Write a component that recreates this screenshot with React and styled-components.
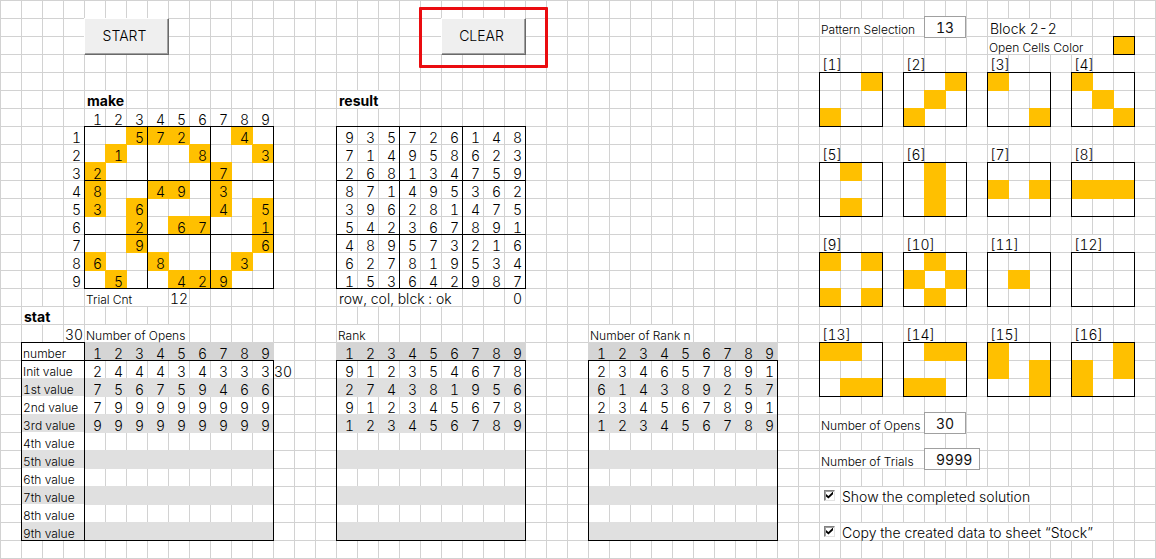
import React, { useState } from "react";
import styled, { createGlobalStyle, css } from "styled-components";

const ORANGE = "#ffc000";
const HEAD = "#d5d5d5";
const BAND = "#e0e0e0";

const GlobalStyle = createGlobalStyle`
  *, *::before, *::after { box-sizing: border-box; }
  body { margin: 0; background: #fff; }
  button, input { font: inherit; color: inherit; }
`;

/* Worksheet surface: 21px by 18px cells */
const Sheet = styled.div`
  display: flex;
  align-items: flex-start;
  gap: 42px;
  min-height: 100vh;
  padding: 18px 21px 0;
  color: #000;
  font-family: Inter, "Liberation Sans", sans-serif;
  font-size: 14px;
  font-weight: 300;
  font-variant-numeric: tabular-nums;
  line-height: 14px;
  background-color: #fff;
  background-image: linear-gradient(to right, #d2d2d2 1px, transparent 1px),
    linear-gradient(to bottom, #d2d2d2 1px, transparent 1px);
  background-size: 21px 18px;
`;

const Main = styled.main`
  flex: none;
`;

const Side = styled.aside`
  flex: none;
`;

const Toolbar = styled.div`
  display: grid;
  grid-template-columns: 252px 252px;
  padding-left: 63px;
  margin-bottom: 36px;
`;

const Slot = styled.div`
  position: relative;
  width: 85px;
  margin-left: ${(p) => (p.$marked ? 105 : 0)}px;
  ${(p) =>
    p.$marked &&
    css`
      &::after {
        content: "";
        position: absolute;
        inset: -11px -22px -13px;
        border: 3px solid #ea0c10;
        border-radius: 1px;
        pointer-events: none;
      }
    `}
`;

const Button = styled.button`
  display: block;
  width: 100%;
  height: 37px;
  padding: 0 4px 2px 0;
  border: 1px solid;
  border-color: #fff #696969 #696969 #fff;
  border-radius: 0;
  box-shadow: inset -1px -1px 0 #a0a0a0;
  background: #efefef;
`;

const Boards = styled.div`
  display: flex;
  gap: 63px;
  padding-left: 42px;
  margin-top: -1px;
`;

const Stats = styled.div`
  display: flex;
`;

const Stat = styled.section`
  margin-right: ${(p) => p.$after || 0}px;
`;

const Line = styled.div`
  display: flex;
  height: 18px;
  padding-left: ${(p) => (p.$indent || 0) * 21}px;
`;

const Text = styled.div`
  width: ${(p) => p.$cells * 21}px;
  height: 18px;
  padding: ${(p) => (p.$small ? 4 : 3)}px ${(p) => (p.$right ? 3 : 0)}px 0
    ${(p) => (p.$small || p.$right ? 1 : 2)}px;
  border: 0 solid transparent;
  border-width: 1px 0 0 1px;
  background: #fff;
  background-clip: padding-box;
  font-size: ${(p) => (p.$small ? 12 : 14)}px;
  white-space: nowrap;
  text-align: ${(p) => (p.$right ? "right" : "left")};
`;

const Title = styled(Text).attrs({ as: "h2" })`
  margin: 0;
  font-weight: 700;
`;

const Total = styled.div`
  width: 21px;
  height: 18px;
  margin: 36px 42px 0 0;
  padding: 5px 0 0 1px;
`;

const Table = styled.table`
  border-collapse: separate;
  border-spacing: 0;
  table-layout: fixed;
  width: ${(p) => p.$cells * 21}px;
`;

/* Edges are shadows, so that a ruled cell keeps its 21 by 18 size */
const edges = ({ $fill, $l, $t, $r, $b }) => {
  const list = [];
  if ($l) list.push("inset 1px 0 0 #000");
  if ($t) list.push("inset 0 1px 0 #000");
  if ($r || $fill) list.push(`1px 0 0 ${$r ? "#000" : $fill}`);
  if ($b || $fill) list.push(`0 1px 0 ${$b ? "#000" : $fill}`);
  if (($r && $b) || $fill) list.push(`1px 1px 0 ${$r || $b ? "#000" : $fill}`);
  return list.join(", ") || "none";
};

const cell = css`
  width: ${(p) => (p.$wide ? 63 : 21)}px;
  height: 18px;
  padding: ${(p) => (p.$wide ? "6px 0 0 2px" : "6px 3px 0 0")};
  background: ${(p) => p.$fill || "transparent"};
  box-shadow: ${edges};
  font-weight: 300;
  font-size: ${(p) => (p.$wide ? 12 : 14)}px;
  line-height: 12px;
  text-align: ${(p) => (p.$wide ? "left" : "right")};
  white-space: nowrap;
`;
const Td = styled.td`${cell}`;
const Th = styled.th`${cell}`;

const PatternHead = styled.div`
  display: grid;
  grid-template-columns: 168px 147px;
  height: 36px;
`;

const Field = styled.label`
  display: flex;
  align-items: center;
  height: 18px;
  margin-top: ${(p) => p.$top || 0}px;
`;

const Box = styled.input`
  width: ${(p) => (p.$wide ? 56 : 42)}px;
  height: 22px;
  padding: 0 0 0 11px;
  border: 1px solid #a0a0a0;
  border-radius: 0;
  background: #fff;
  color: #111;
  font-weight: 400;
  flex: none;
`;

const ColorLine = styled.div`
  display: flex;
  justify-content: space-between;
  height: 18px;
`;

const Swatch = styled.span`
  width: 22px;
  height: 19px;
  margin-right: -1px;
  border: 1px solid #000;
  background: ${ORANGE};
`;

const Patterns = styled.div`
  display: grid;
  grid-template-columns: repeat(4, 63px);
  gap: 18px 21px;
`;

const Check = styled.label`
  display: flex;
  align-items: center;
  gap: 6px;
  height: 18px;
  margin-top: 18px;
  padding-left: 5px;
`;

const Tick = styled.input`
  appearance: none;
  position: relative;
  width: 11px;
  height: 11px;
  margin: 0;
  border: 1px solid;
  border-color: #808080 #e3e3e3 #e3e3e3 #808080;
  box-shadow: inset 1px 1px 0 #a0a0a0;
  background: #fff;
  &:checked::after {
    content: "";
    position: absolute;
    inset: 1px;
    background: #000;
    clip-path: polygon(0 35%, 35% 65%, 100% 0, 100% 38%, 35% 100%, 0 72%);
  }
`;

const CheckText = styled.span`
  padding: 3px 1px 0;
  background: #fff;
  white-space: nowrap;
`;

const NINE = [1, 2, 3, 4, 5, 6, 7, 8, 9];

const PUZZLE = [
  "005720040", "010008003", "200000700",
  "800490300", "306000405", "002067001",
  "009000006", "600800030", "050042900",
];
const SOLUTION = [
  "935726148", "714958623", "268134759",
  "871495362", "396281475", "542367891",
  "489573216", "627819534", "153642987",
];
const OPENS = ["244434333", "756759466", "799999999", "999999999"];
const RANK = ["912354678", "274381956", "912345678", "123456789"];
const RANK_N = ["234657891", "614389257", "234567891", "123456789"];
const VALUES = ["Init", "1st", "2nd", "3rd", "4th", "5th", "6th", "7th", "8th", "9th"];

const PATTERNS = [
  "001000100", "001010100", "100000001", "100010001",
  "010000010", "010010010", "000101000", "000111000",
  "101000101", "010101010", "000010000", "000000000",
  "110000011", "011000110", "100101001", "001101100",
];

function Sudoku({ rows, labelled, name }) {
  return (
    <Table $cells={labelled ? 10 : 9} aria-label={name}>
      {labelled && (
        <thead>
          <tr>
            <Td />
            {NINE.map((n) => <Th key={n} scope="col">{n}</Th>)}
          </tr>
        </thead>
      )}
      <tbody>
        {rows.map((row, y) => (
          <tr key={y}>
            {labelled && <Th scope="row">{y + 1}</Th>}
            {[...row].map((d, x) => (
              <Td
                key={x}
                $fill={labelled && d !== "0" ? ORANGE : undefined}
                $l={x % 3 === 0}
                $t={y % 3 === 0}
                $r={x === 8}
                $b={y === 8}
              >
                {d === "0" ? "" : d}
              </Td>
            ))}
          </tr>
        ))}
      </tbody>
    </Table>
  );
}

function StatTable({ rows, labelled, name }) {
  return (
    <Table $cells={labelled ? 12 : 9} aria-label={name}>
      <thead>
        <tr>
          {labelled && <Th $wide $l $t $fill="#fff" scope="col">number</Th>}
          {NINE.map((n) => (
            <Th key={n} $fill={HEAD} $l={labelled && n === 1} scope="col">{n}</Th>
          ))}
        </tr>
      </thead>
      <tbody>
        {VALUES.map((v, y) => {
          const fill = y % 2 ? BAND : undefined;
          const last = y === VALUES.length - 1;
          return (
            <tr key={v}>
              {labelled && (
                <Th $wide $l $t={y === 0} $b={last} $fill={fill || "#fff"} scope="row">
                  {v} value
                </Th>
              )}
              {NINE.map((n, x) => (
                <Td key={n} $fill={fill} $l={x === 0} $t={y === 0} $r={x === 8} $b={last}>
                  {rows[y] ? rows[y][x] : ""}
                </Td>
              ))}
            </tr>
          );
        })}
      </tbody>
    </Table>
  );
}

function Pattern({ index, cells }) {
  return (
    <div>
      <Text $cells={index > 9 ? 2 : 1}>[{index}]</Text>
      <Table $cells={3} aria-label={`Pattern ${index}`}>
        <tbody>
          {[0, 1, 2].map((y) => (
            <tr key={y}>
              {[0, 1, 2].map((x) => (
                <Td
                  key={x}
                  $fill={cells[y * 3 + x] === "1" ? ORANGE : undefined}
                  $l={x === 0}
                  $t={y === 0}
                  $r={x === 2}
                  $b={y === 2}
                />
              ))}
            </tr>
          ))}
        </tbody>
      </Table>
    </div>
  );
}

export default function App() {
  const [pattern, setPattern] = useState("13");
  const [opens, setOpens] = useState("30");
  const [trials, setTrials] = useState("9999");

  return (
    <>
      <GlobalStyle />
      <Sheet>
        <Main>
          <Toolbar>
            <Slot><Button type="button">START</Button></Slot>
            <Slot $marked><Button type="button">CLEAR</Button></Slot>
          </Toolbar>

          <Boards>
            <section>
              <Line $indent={1}><Title $cells={2}>make</Title></Line>
              <Sudoku rows={PUZZLE} labelled name="make" />
              <Line $indent={1}>
                <Text $small $cells={4}>Trial Cnt</Text>
                <Text $right $cells={1}>12</Text>
              </Line>
            </section>
            <section>
              <Line><Title $cells={3}>result</Title></Line>
              <Line />
              <Sudoku rows={SOLUTION} name="result" />
              <Line>
                <Text $cells={6}>row, col, blck : ok</Text>
                <Line $indent={2}><Text $right $cells={1}>0</Text></Line>
              </Line>
            </section>
          </Boards>

          <Line><Title $cells={2}>stat</Title></Line>
          <Stats>
            <Stat>
              <Line $indent={2}>
                <Text $right $cells={1}>30</Text>
                <Text $small $cells={5}>Number of Opens</Text>
              </Line>
              <StatTable rows={OPENS} labelled name="Number of Opens" />
            </Stat>
            <Total>30</Total>
            <Stat $after={63}>
              <Line><Text $small $cells={2}>Rank</Text></Line>
              <StatTable rows={RANK} name="Rank" />
            </Stat>
            <Stat>
              <Line><Text $small $cells={5}>Number of Rank n</Text></Line>
              <StatTable rows={RANK_N} name="Number of Rank n" />
            </Stat>
          </Stats>
        </Main>

        <Side>
          <PatternHead>
            <Field>
              <Text as="span" $small $cells={5}>Pattern Selection</Text>
              <Box value={pattern} onChange={(e) => setPattern(e.target.value)} />
            </Field>
            <div>
              <Text $cells={4}>Block 2-2</Text>
              <ColorLine>
                <Text $small $cells={5}>Open Cells Color</Text>
                <Swatch />
              </ColorLine>
            </div>
          </PatternHead>

          <Patterns>
            {PATTERNS.map((cells, i) => (
              <Pattern key={i} index={i + 1} cells={cells} />
            ))}
          </Patterns>

          <Field $top={18}>
            <Text as="span" $small $cells={5}>Number of Opens</Text>
            <Box value={opens} onChange={(e) => setOpens(e.target.value)} />
          </Field>
          <Field $top={18}>
            <Text as="span" $small $cells={5}>Number of Trials</Text>
            <Box $wide value={trials} onChange={(e) => setTrials(e.target.value)} />
          </Field>

          <Check>
            <Tick type="checkbox" defaultChecked />
            <CheckText>Show the completed solution</CheckText>
          </Check>
          <Check>
            <Tick type="checkbox" defaultChecked />
            <CheckText>Copy the created data to sheet “Stock”</CheckText>
          </Check>
        </Side>
      </Sheet>
    </>
  );
}
